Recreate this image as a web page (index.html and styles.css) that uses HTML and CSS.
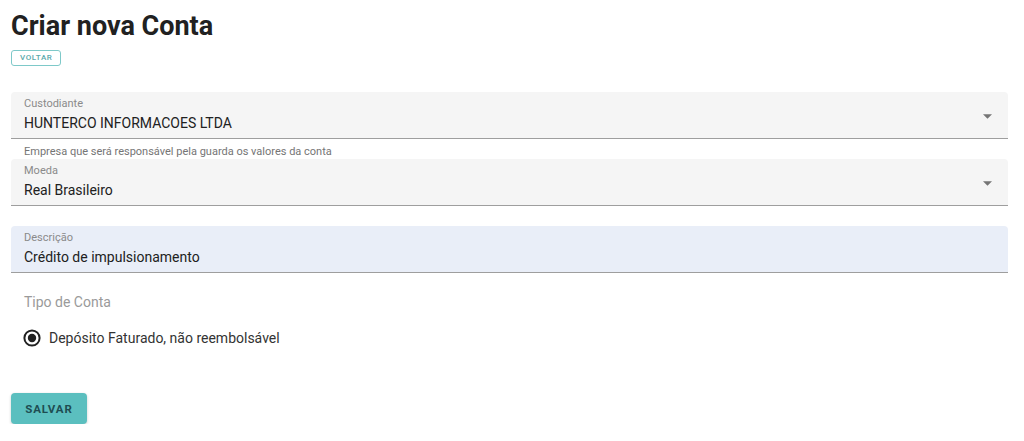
FILE: index.html
```html
<!DOCTYPE html>
<html lang="pt">
<head>
<meta charset="utf-8">
<link rel="stylesheet" href="styles.css">
</head>
<body>
<div class="page">
  <h1 class="title">Criar nova Conta</h1>
  <button class="btn-outline">VOLTAR</button>

  <form class="form">
    <div class="field select">
      <span class="label">Custodiante</span>
      <span class="value">HUNTERCO INFORMACOES LTDA</span>
      <svg class="arrow" width="9" height="5" viewBox="0 0 10 5"><path d="M0 0L5 5L10 0Z" fill="#757575"/></svg>
    </div>
    <div class="helper">Empresa que será responsável pela guarda os valores da conta</div>

    <div class="field select">
      <span class="label">Moeda</span>
      <span class="value">Real Brasileiro</span>
      <svg class="arrow" width="9" height="5" viewBox="0 0 10 5"><path d="M0 0L5 5L10 0Z" fill="#757575"/></svg>
    </div>

    <div class="field focused">
      <span class="label">Descrição</span>
      <span class="value">Crédito de impulsionamento</span>
    </div>

    <div class="group">
      <div class="group-label">Tipo de Conta</div>
      <label class="radio">
        <svg width="20" height="20" viewBox="0 0 20 20"><circle cx="10" cy="10" r="7.6" fill="none" stroke="#212121" stroke-width="2"/><circle cx="10" cy="10" r="4.2" fill="#212121"/></svg>
        <span>Depósito Faturado, não reembolsável</span>
      </label>
    </div>

    <button type="button" class="btn-primary">SALVAR</button>
  </form>
</div>
</body>
</html>
```
FILE: styles.css
```css
* { box-sizing: border-box; }
html, body { margin: 0; padding: 0; background: #fff; }
body { font-family: Roboto, "Noto Sans", Arial, sans-serif; color: #212121; }
.page { padding: 10px 16px 0 11px; display: flex; flex-direction: column; align-items: flex-start; }
.title { margin: 0; font-size: 27px; font-weight: 700; line-height: 32px; color: #212121; letter-spacing: 0; }
.btn-outline {
  margin-top: 8px; height: 16px; padding: 0 8px; border: 1px solid #7ec9c9; border-radius: 3px;
  background: #fff; color: #5aa9ab; font-family: inherit; font-size: 8px; font-weight: 500; letter-spacing: 0.6px;
  line-height: 14px;
}
.form { align-self: stretch; display: flex; flex-direction: column; margin-top: 26px; }
.field {
  position: relative; height: 47px; background: #f5f5f5; border-bottom: 1px solid #9e9e9e;
  border-radius: 4px 4px 0 0; padding: 6px 13px 0; display: flex; flex-direction: column;
}
.field.focused { background: #e9eef8; margin-top: 20px; }
.label { font-size: 11px; line-height: 12px; color: #8a8a8a; }
.value { font-size: 14px; line-height: 20px; margin-top: 3px; color: #212121; }
.arrow { position: absolute; right: 16px; top: 22px; }
.helper { font-size: 11px; line-height: 12px; color: #757575; padding: 7px 13px 1px; height: 20px; }
.group { padding: 20px 13px 0; }
.group-label { font-size: 14px; color: #9a9a9a; line-height: 18px; }
.radio { display: flex; align-items: center; gap: 7px; margin-top: 17px; font-size: 14px; color: #333; margin-left: -2px; }
.radio svg { display: block; }
.btn-primary {
  align-self: flex-start; margin-top: 45px; width: 76px; height: 31px; border: 0; border-radius: 4px;
  background: #5bbfbf; color: #1e4d52; font-family: inherit; font-size: 11.5px; font-weight: 700; letter-spacing: 0.9px;
  box-shadow: 0 1px 3px rgba(0,0,0,0.2);
}
```
